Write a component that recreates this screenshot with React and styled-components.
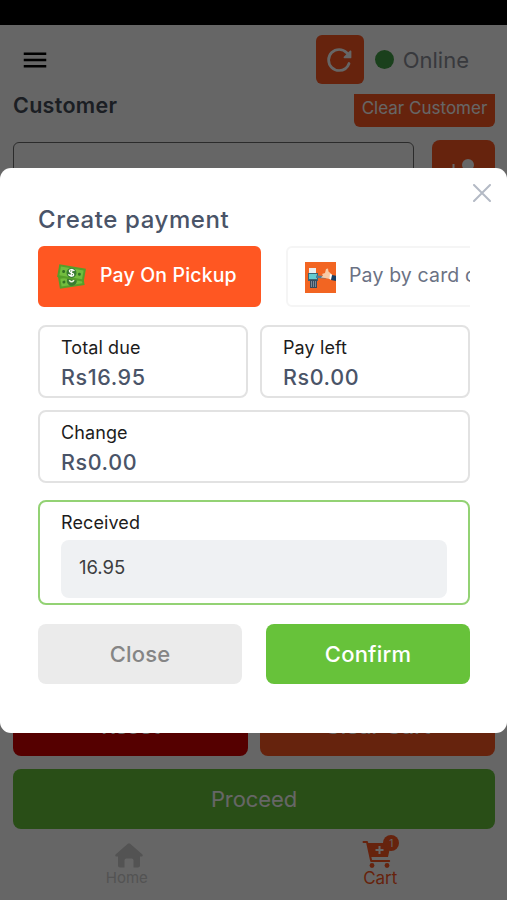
import styled, { createGlobalStyle } from 'styled-components';
import { IoMenuSharp, IoReload } from 'react-icons/io5';

const MAIN_COLOR = '#ff5722';
const GREEN = '#67c23a';

const GlobalStyle = createGlobalStyle`
  * {
    box-sizing: border-box;
    margin: 0;
    padding: 0;
  }

  body {
    background: #fff;
    font-family: Inter, 'Liberation Sans', sans-serif;
  }

  button, input {
    border: none;
    font-family: inherit;
  }

  svg {
    display: block;
    flex: none;
  }
`;

const Screen = styled.div`
  width: 507px;
  height: 900px;
  position: relative;
  overflow: hidden;
  display: flex;
  flex-direction: column;
`;

const StatusBar = styled.div`
  flex: none;
  height: 25px;
  background: #000;
`;

const Header = styled.header`
  flex: none;
  height: 69px;
  padding: 0 38px 0 20px;
  display: flex;
  align-items: center;
`;

const RefreshButton = styled.button`
  width: 48px;
  height: 49px;
  margin: 0 11px 0 auto;
  border-radius: 6px;
  background: ${MAIN_COLOR};
  color: #fff;
  display: grid;
  place-items: center;

  path:first-child {
    stroke-width: 50px;
  }
`;

const OnlineStatus = styled.div`
  display: flex;
  align-items: center;
  color: #8d9099;
  font-size: 22px;
  line-height: 28px;

  &::before {
    content: '';
    width: 19px;
    height: 19px;
    margin-right: 9px;
    border-radius: 50%;
    background: #43a047;
  }
`;

const Main = styled.main`
  flex: 1;
  padding: 0 12px 0 13px;
  display: flex;
  flex-direction: column;
`;

const TitleRow = styled.div`
  height: 33px;
  display: flex;
  justify-content: space-between;

  h2 {
    color: #454c58;
    font-size: 21.5px;
    font-weight: 600;
    line-height: 22px;
    letter-spacing: 0.3px;
  }
`;

const ClearCustomer = styled.button`
  width: 141px;
  height: 33px;
  padding-bottom: 6px;
  border-radius: 0 0 6px 6px;
  background: ${MAIN_COLOR};
  color: #fff;
  font-size: 17px;
  white-space: nowrap;
`;

const SearchRow = styled.div`
  margin-top: 13px;
  display: flex;
  justify-content: space-between;
`;

const SearchBox = styled.div`
  width: 401px;
  height: 60px;
  margin-top: 2px;
  border: 1px solid #6b6b6b;
  border-radius: 6px;
`;

const AddButton = styled.button`
  width: 63px;
  height: 60px;
  padding-top: 2px;
  border-radius: 8px;
  background: ${MAIN_COLOR};
  color: #fff;
  display: grid;
  place-items: center;
`;

const Actions = styled.div`
  margin-top: auto;
  display: grid;
  grid-template-columns: 1fr 1fr;
  gap: 13px 12px;
`;

const ActionButton = styled.button`
  height: 60px;
  grid-column: span ${({ $span = 1 }) => $span};
  border-radius: 8px;
  background: ${({ $color }) => $color};
  color: #fff;
  font-size: 22px;
  font-weight: ${({ $weight = 500 }) => $weight};
  letter-spacing: -0.1px;
`;

const TabBar = styled.nav`
  flex: none;
  height: 71px;
  display: grid;
  grid-template-columns: 1fr 1fr;
`;

const Tab = styled.div`
  padding-top: 10px;
  display: flex;
  flex-direction: column;
  align-items: center;
  color: ${({ $active }) => ($active ? MAIN_COLOR : '#cfcfcf')};
  font-size: ${({ $active }) => ($active ? 17 : 15)}px;
  line-height: 20px;
`;

const TabIcon = styled.div`
  height: 29px;
  margin-${({ $shift }) => ($shift > 0 ? 'left' : 'right')}: ${({ $shift }) => Math.abs($shift) * 2}px;
  position: relative;
  display: flex;
  align-items: flex-end;
`;

const Badge = styled.span`
  position: absolute;
  top: -4px;
  right: -7px;
  width: 16px;
  height: 16px;
  border-radius: 50%;
  background: ${MAIN_COLOR};
  color: #fff;
  font-size: 10px;
  line-height: 16px;
  text-align: center;
`;

const Overlay = styled.div`
  position: absolute;
  inset: 25px 0 0;
  padding-top: 143px;
  background: rgba(0, 0, 0, 0.6);
`;

const Modal = styled.section`
  height: 565px;
  padding: 38px 37px 0 38px;
  border-radius: 11px;
  background: #fff;
  position: relative;

  h1 {
    color: #4a5468;
    font-size: 24px;
    font-weight: 500;
    line-height: 28px;
    letter-spacing: 0.6px;
  }
`;

const CloseIcon = styled.button`
  position: absolute;
  top: 16px;
  right: 16px;
  background: none;
`;

const Methods = styled.div`
  margin-top: 12px;
  display: flex;
  gap: 25px;
  overflow: hidden;
`;

const Method = styled.button`
  flex: none;
  width: ${({ $width }) => $width}px;
  height: 61px;
  padding: 0 0 3px 17px;
  border: 2px solid ${({ $active }) => ($active ? MAIN_COLOR : '#f5f5f5')};
  border-radius: 6px;
  background: ${({ $active }) => ($active ? MAIN_COLOR : '#fff')};
  color: ${({ $active }) => ($active ? '#fff' : '#6b7284')};
  display: flex;
  align-items: center;
  gap: 13px;
  font-size: 19.5px;
  font-weight: ${({ $active }) => ($active ? 500 : 400)};
  letter-spacing: 0.15px;
  white-space: nowrap;

  svg {
    position: relative;
    top: 2px;
  }
`;

const Amounts = styled.div`
  margin-top: 18px;
  display: grid;
  grid-template-columns: 1fr 1fr;
  gap: 12px;
`;

const Amount = styled.div`
  height: 73px;
  padding: 9px 0 0 21px;
  grid-column: span ${({ $span = 1 }) => $span};
  border: 2px solid #e2e2e2;
  border-radius: 8px;
`;

const Label = styled.p`
  color: #1c1c1c;
  font-size: 18px;
  line-height: 24px;
  letter-spacing: 0.1px;
`;

const Value = styled.p`
  margin-top: 3px;
  color: #4a5468;
  font-size: 21.5px;
  font-weight: 500;
  line-height: 29px;
  letter-spacing: 0.6px;
`;

const Received = styled.div`
  height: 105px;
  margin-top: 17px;
  padding: 9px 21px 0 21px;
  border: 2px solid #93d274;
  border-radius: 8px;
`;

const ReceivedInput = styled.input`
  display: block;
  width: 100%;
  height: 58px;
  margin-top: 5px;
  padding: 0 18px 5px;
  border-radius: 8px;
  background: #eff1f3;
  color: #3c3d40;
  font-size: 18.5px;
`;

const Footer = styled.div`
  margin-top: 19px;
  display: grid;
  grid-template-columns: 1fr 1fr;
  gap: 24px;
`;

const FooterButton = styled.button`
  height: 60px;
  border-radius: 8px;
  background: ${({ $color }) => $color};
  color: ${({ $text }) => $text};
  font-size: 22px;
  font-weight: 500;
  letter-spacing: 0.2px;
`;

const CashIcon = () => (
  <svg width='30' height='26' viewBox='0 0 30 26'>
    <g transform='rotate(-9 14 18)'>
      <rect x='2' y='11' width='25' height='12' fill='#559f2a' />
      <rect x='4' y='13' width='21' height='8' fill='#72bd3f' />
      <circle cx='15' cy='17' r='5' fill='#397c32' />
      <path d='M12.5 16q2.5 4 5 0' fill='none' stroke='#e9f5df' strokeWidth='1.5' />
      <circle cx='7' cy='17' r='1.5' fill='#327024' />
    </g>
    <g transform='rotate(10 15 9)'>
      <rect x='1' y='2.5' width='27' height='13' fill='#559f2a' />
      <rect x='3' y='4.5' width='23' height='9' fill='#72bd3f' />
      <circle cx='14.5' cy='9' r='5' fill='#397c32' />
      <path
        d='M17 6.5c-1-1-5-1-5 .8 0 2 5 1.3 5 3.3 0 1.8-4 1.8-5.3.5M14.5 5v8'
        fill='none'
        stroke='#fff'
        strokeWidth='1.3'
      />
      <circle cx='6.5' cy='9' r='1.5' fill='#327024' />
      <circle cx='22.5' cy='9' r='1.5' fill='#327024' />
    </g>
  </svg>
);

const CardIcon = () => (
  <svg width='31' height='31' viewBox='0 0 31 31'>
    <path fill='#f26522' d='M0 0h31v31H0z' />
    <path fill='#e9eef0' d='M4 6h7v8H4z' />
    <path fill='#3d6474' d='M3 11h10v8H3z' />
    <path fill='#64cbd0' d='M4 12h8v5H4z' />
    <path fill='#374b5e' d='M5 18h7v8H5z' />
    <path stroke='#c2cbd0' strokeDasharray='1 1' d='M6 20h5M6 22h5M6 24h5' />
    <path fill='#547c94' d='M11 13.5 21 14v2.5L11 16z' />
    <path fill='#f8caa5' d='m17 12 3-1 1-4 2-.5.5 3 3.5 3v5l-7-1.5-4-.5 2-2z' />
    <path fill='#fff' d='m25 12 2.5 1-1 5-2-1z' />
    <path fill='#183d62' d='m27 13 4 .7V19l-5-1z' />
  </svg>
);

const HomeIcon = () => (
  <svg width='28' height='25' viewBox='0 0 28 25'>
    <path
      fill='currentColor'
      d='M12.8.8a2 2 0 0 1 2.4 0l12 10.5c1 1 .5 2.2-.7 2.2H25v9c0 1.2-.8 2-2 2h-4.500v-7q0-2-2-2h-5q-2 0-2 2v7H5c-1.200 0-2-.8-2-2v-9H1.500c-1.200 0-1.700-1.200-.7-2.200z'
    />
  </svg>
);

const CartIcon = () => (
  <svg width='30' height='28' viewBox='0 0 30 28'>
    <path
      fill='none'
      stroke='currentColor'
      strokeWidth='2'
      strokeLinecap='round'
      strokeLinejoin='round'
      d='M1.500 2H5l4.200 19h18'
    />
    <path fill='currentColor' d='M5 3h24l-3 14H8.500z' />
    <path stroke='#fff' strokeWidth='2' d='M17.500 6v8M13.500 10h8' />
    <circle cx='10' cy='25.500' r='2.400' fill='currentColor' />
    <circle cx='25' cy='25.500' r='2.400' fill='currentColor' />
  </svg>
);

const AddUserIcon = () => (
  <svg width='30' height='24' viewBox='0 0 30 24' fill='currentColor'>
    <circle cx='19' cy='6' r='6' />
    <path d='M8 24c0-7 5-10 11-10s11 3 11 10zM3.500 5h2v4h4v2h-4v4h-2v-4h-4V9h4z' />
  </svg>
);

const App = () => {
  return (
    <Screen>
      <GlobalStyle />
      <StatusBar />
      <Header>
        <IoMenuSharp size={30} />
        <RefreshButton>
          <IoReload size={28} />
        </RefreshButton>
        <OnlineStatus>Online</OnlineStatus>
      </Header>
      <Main>
        <TitleRow>
          <h2>Customer</h2>
          <ClearCustomer>Clear Customer</ClearCustomer>
        </TitleRow>
        <SearchRow>
          <SearchBox />
          <AddButton>
            <AddUserIcon />
          </AddButton>
        </SearchRow>
        <Actions>
          <ActionButton $color='#d40000'>Reset</ActionButton>
          <ActionButton $color={MAIN_COLOR}>Clear Cart</ActionButton>
          <ActionButton $color={GREEN} $span={2} $weight={400}>
            Proceed
          </ActionButton>
        </Actions>
      </Main>
      <TabBar>
        <Tab>
          <TabIcon $shift={2}>
            <HomeIcon />
          </TabIcon>
          Home
        </Tab>
        <Tab $active>
          <TabIcon $shift={-3}>
            <CartIcon />
            <Badge>1</Badge>
          </TabIcon>
          Cart
        </Tab>
      </TabBar>
      <Overlay>
        <Modal>
          <CloseIcon>
            <svg width='18' height='18' viewBox='0 0 18 18'>
              <path stroke='#b4bac5' strokeWidth='2' strokeLinecap='round' d='m1 1 16 16M17 1 1 17' />
            </svg>
          </CloseIcon>
          <h1>Create payment</h1>
          <Methods>
            <Method $active $width={223}>
              <CashIcon />
              Pay On Pickup
            </Method>
            <Method $width={300}>
              <CardIcon />
              Pay by card on pickup
            </Method>
          </Methods>
          <Amounts>
            <Amount>
              <Label>Total due</Label>
              <Value>Rs16.95</Value>
            </Amount>
            <Amount>
              <Label>Pay left</Label>
              <Value>Rs0.00</Value>
            </Amount>
            <Amount $span={2}>
              <Label>Change</Label>
              <Value>Rs0.00</Value>
            </Amount>
          </Amounts>
          <Received>
            <Label>Received</Label>
            <ReceivedInput defaultValue='16.95' />
          </Received>
          <Footer>
            <FooterButton $color='#ebebeb' $text='#858585'>
              Close
            </FooterButton>
            <FooterButton $color={GREEN} $text='#fff'>
              Confirm
            </FooterButton>
          </Footer>
        </Modal>
      </Overlay>
    </Screen>
  );
};

export default App;
